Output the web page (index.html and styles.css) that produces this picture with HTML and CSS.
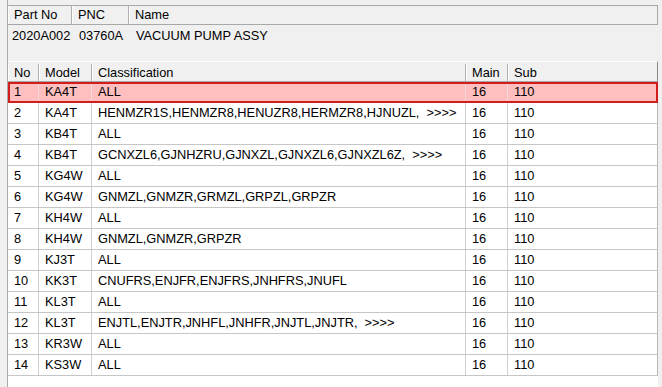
FILE: index.html
```html
<!DOCTYPE html>
<html>
<head>
<meta charset="utf-8">
<link rel="stylesheet" href="styles.css">
</head>
<body>
<div class="frame">
  <div class="part">
    <div class="part-head">
      <div class="hc">Part No</div>
      <div class="hc">PNC</div>
      <div class="hc">Name</div>
    </div>
    <div class="part-row">
      <div class="pc first">2020A002</div>
      <div class="pc">03760A</div>
      <div class="pc">VACUUM PUMP ASSY</div>
    </div>
  </div>
  <div class="list">
    <div class="list-head">
      <div class="hc">No</div>
      <div class="hc">Model</div>
      <div class="hc">Classification</div>
      <div class="hc">Main</div>
      <div class="hc">Sub</div>
    </div>
    <div class="rows">
      <div class="row selected"><div class="c">1</div><div class="c">KA4T</div><div class="c">ALL</div><div class="c">16</div><div class="c">110</div></div>
      <div class="row"><div class="c">2</div><div class="c">KA4T</div><div class="c">HENMZR1S,HENMZR8,HENUZR8,HERMZR8,HJNUZL, &nbsp;&gt;&gt;&gt;&gt;</div><div class="c">16</div><div class="c">110</div></div>
      <div class="row"><div class="c">3</div><div class="c">KB4T</div><div class="c">ALL</div><div class="c">16</div><div class="c">110</div></div>
      <div class="row"><div class="c">4</div><div class="c">KB4T</div><div class="c">GCNXZL6,GJNHZRU,GJNXZL,GJNXZL6,GJNXZL6Z, &nbsp;&gt;&gt;&gt;&gt;</div><div class="c">16</div><div class="c">110</div></div>
      <div class="row"><div class="c">5</div><div class="c">KG4W</div><div class="c">ALL</div><div class="c">16</div><div class="c">110</div></div>
      <div class="row"><div class="c">6</div><div class="c">KG4W</div><div class="c">GNMZL,GNMZR,GRMZL,GRPZL,GRPZR</div><div class="c">16</div><div class="c">110</div></div>
      <div class="row"><div class="c">7</div><div class="c">KH4W</div><div class="c">ALL</div><div class="c">16</div><div class="c">110</div></div>
      <div class="row"><div class="c">8</div><div class="c">KH4W</div><div class="c">GNMZL,GNMZR,GRPZR</div><div class="c">16</div><div class="c">110</div></div>
      <div class="row"><div class="c">9</div><div class="c">KJ3T</div><div class="c">ALL</div><div class="c">16</div><div class="c">110</div></div>
      <div class="row"><div class="c">10</div><div class="c">KK3T</div><div class="c">CNUFRS,ENJFR,ENJFRS,JNHFRS,JNUFL</div><div class="c">16</div><div class="c">110</div></div>
      <div class="row"><div class="c">11</div><div class="c">KL3T</div><div class="c">ALL</div><div class="c">16</div><div class="c">110</div></div>
      <div class="row"><div class="c">12</div><div class="c">KL3T</div><div class="c">ENJTL,ENJTR,JNHFL,JNHFR,JNJTL,JNJTR, &nbsp;&gt;&gt;&gt;&gt;</div><div class="c">16</div><div class="c">110</div></div>
      <div class="row"><div class="c">13</div><div class="c">KR3W</div><div class="c">ALL</div><div class="c">16</div><div class="c">110</div></div>
      <div class="row"><div class="c">14</div><div class="c">KS3W</div><div class="c">ALL</div><div class="c">16</div><div class="c">110</div></div>
    </div>
  </div>
</div>
</body>
</html>
```
FILE: styles.css
```css
* { box-sizing: border-box; }
html, body { margin: 0; padding: 0; }
body {
  background: #f0f0f0;
  font-family: "Liberation Sans", Arial, sans-serif;
  font-size: 12.8px;
  color: #000;
  width: 662px;
  height: 387px;
  overflow: hidden;
}
.frame {
  margin-left: 7px;
  width: 651px;
  height: 387px;
  border-left: 1px solid #a9a9a9;
  display: flex;
  flex-direction: column;
}
.part { padding-top: 5px; }
.part-head {
  display: grid;
  grid-template-columns: 64px 57px 1fr;
  height: 20px;
  width: 650px;
  border-top: 1px solid #a8a8a8;
  border-bottom: 1px solid #a8a8a8;
  border-right: 1px solid #a8a8a8;
  background: #f0f0f0;
}
.hc {
  padding-left: 6px;
  line-height: 18px;
  border-right: 1px solid #b0b0b0;
  box-shadow: inset 1px 0 #ffffff;
  white-space: nowrap;
  overflow: hidden;
}
.hc:last-child { border-right: none; }
.part-row {
  display: grid;
  grid-template-columns: 64px 57px 1fr;
  height: 36px;
  line-height: 22px;
}
.pc { padding-left: 7px; white-space: nowrap; }
.pc.first { padding-left: 4px; }
.list {
  flex: 1;
  display: flex;
  flex-direction: column;
  width: 650px;
}
.list-head {
  display: grid;
  grid-template-columns: 31px 53px 374px 42px 1fr;
  height: 21px;
  padding-top: 2px;
  border-top: 1px solid #ffffff;
  border-bottom: 1px solid #a8a8a8;
  border-right: 1px solid #8c8c8c;
  background: #f0f0f0;
}
.list-head .hc { line-height: 17px; }
.rows {
  flex: 1;
  background: #ffffff;
}
.row {
  display: grid;
  grid-template-columns: 31px 53px 374px 42px 1fr;
  height: 21px;
  border-bottom: 1px solid #c6c6c6;
  border-right: 1px solid #b8b8b8;
}
.c {
  padding-left: 6px;
  line-height: 20px;
  border-right: 1px solid #d0d0d0;
  white-space: nowrap;
  overflow: hidden;
}
.c:last-child { border-right: none; }
.row.selected {
  background: #ffbfbf;
  outline: 2px solid #d21d1d;
  outline-offset: -2px;
  border-bottom-color: #d21d1d;
}
.row.selected .c { border-right-color: #f2d8d8; }
```
